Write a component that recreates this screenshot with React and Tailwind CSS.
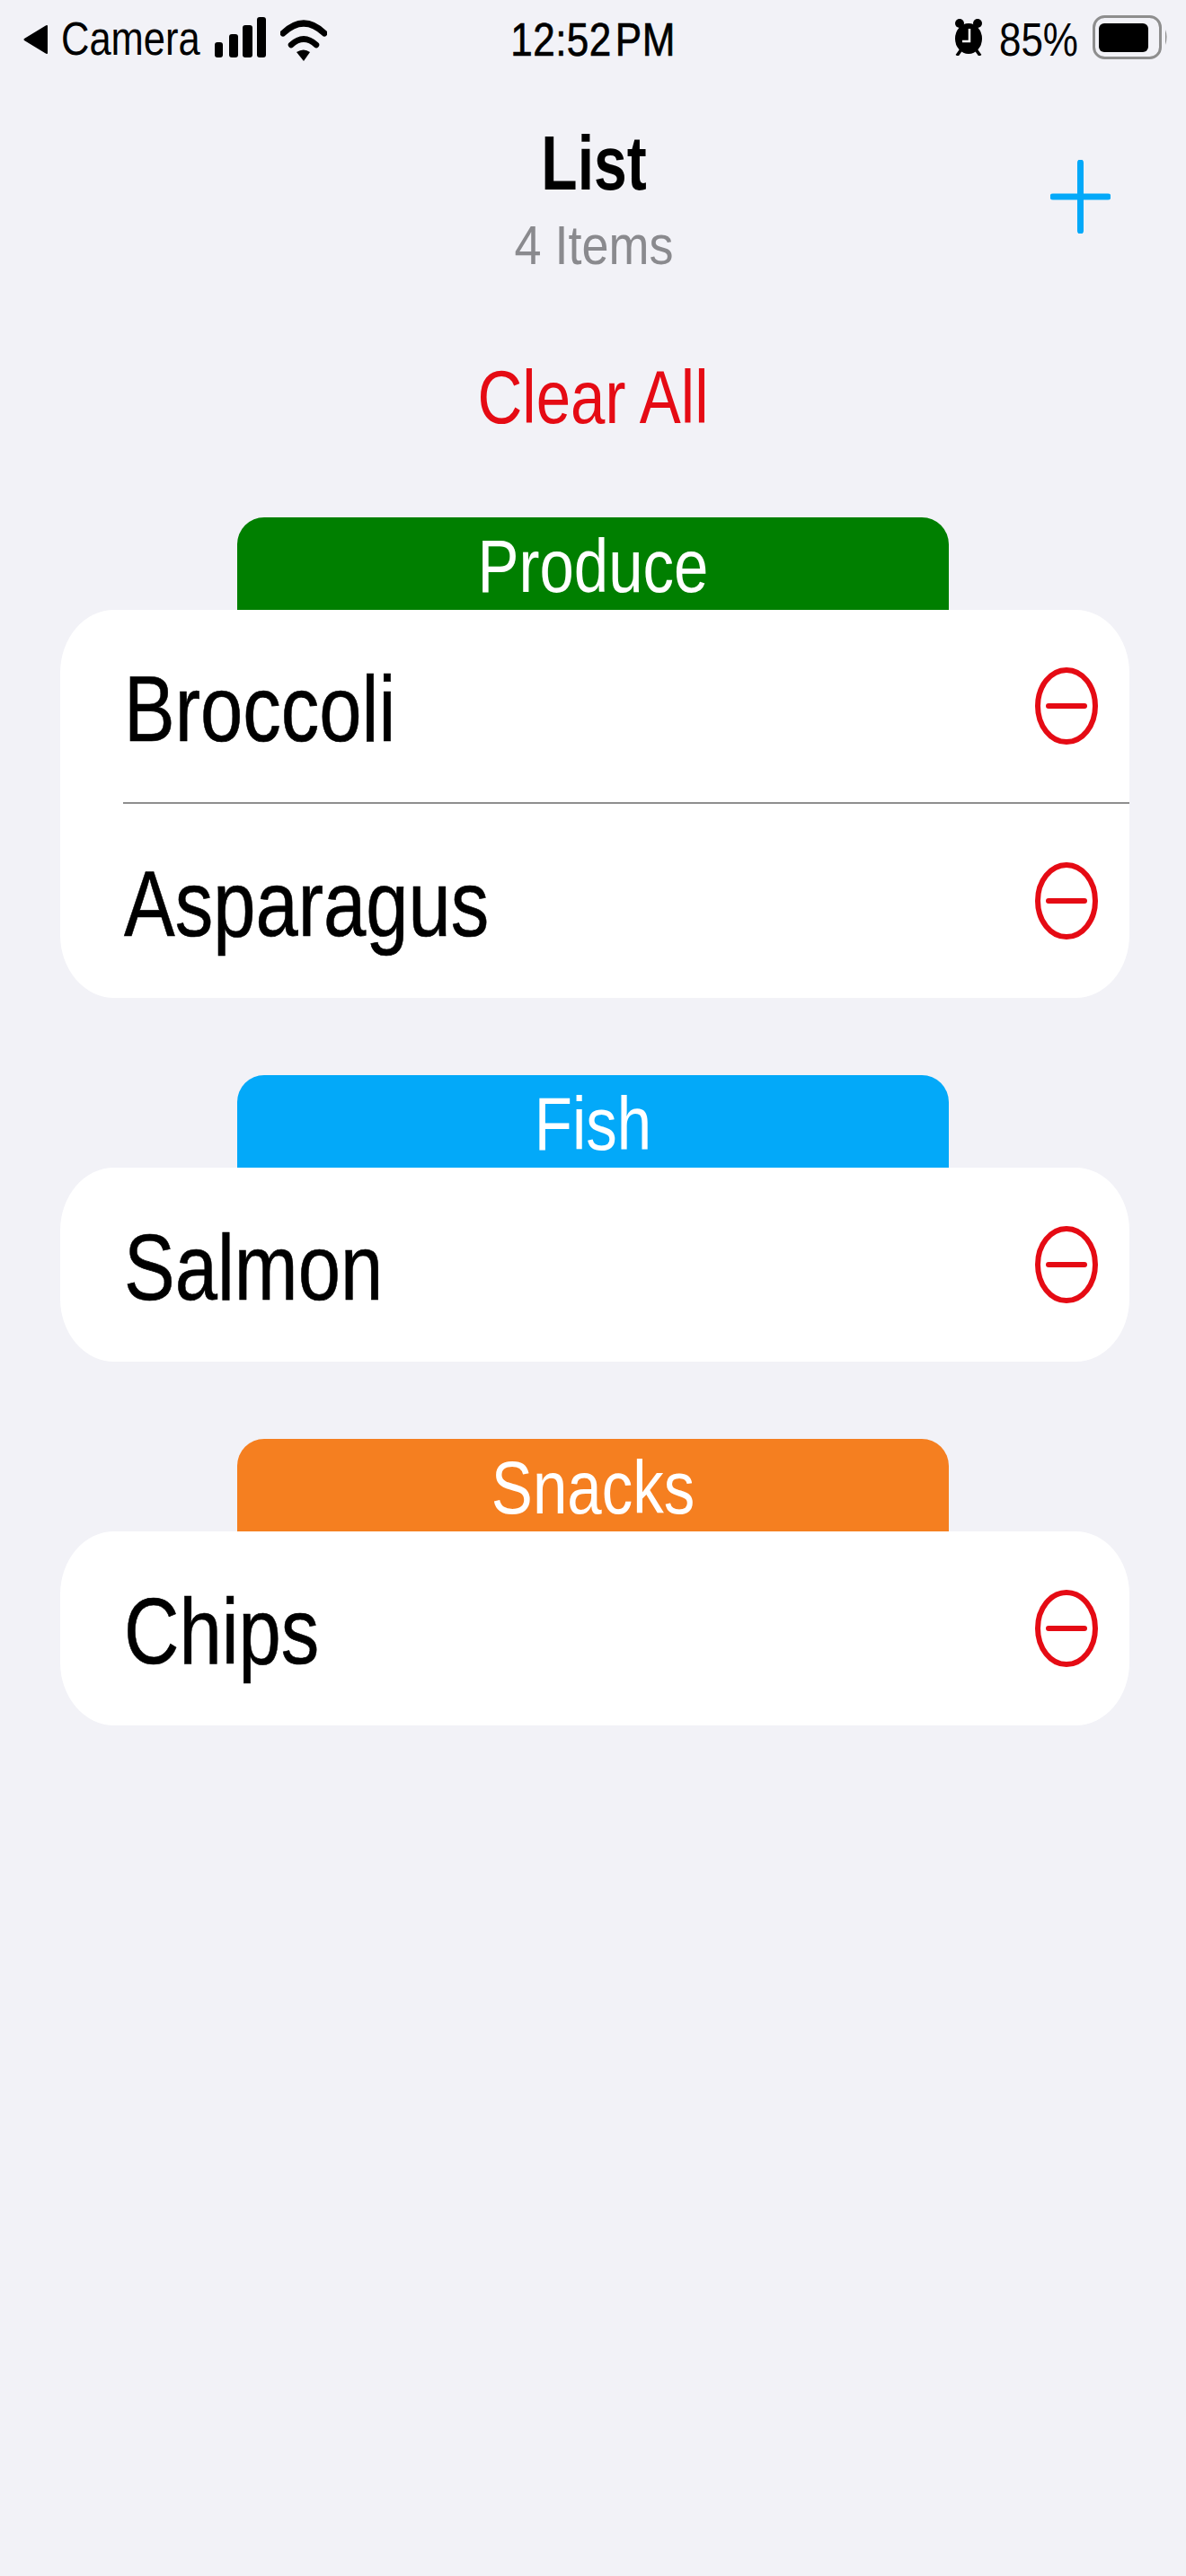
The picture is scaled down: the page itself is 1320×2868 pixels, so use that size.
const sections = [
  { name: 'Produce', color: 'bg-[#007f00]', items: ['Broccoli', 'Asparagus'] },
  { name: 'Fish', color: 'bg-[#03a9f9]', items: ['Salmon'] },
  { name: 'Snacks', color: 'bg-[#f57f20]', items: ['Chips'] },
]

function StatusBar() {
  return (
    <div className="grid grid-cols-[1fr_auto_1fr] items-center h-[88px] text-[43px] leading-none text-black">
      {/* Left */}
      <div className="flex items-center pl-[26px]">
        <svg width="27" height="32" viewBox="0 0 27 32" className="mr-[15px]">
          <path d="M27 1 L27 31 Q27 33 24 31 L1 17 Q0 16 1 15 L24 1 Q27 -1 27 1 Z" fill="#000" />
        </svg>
        <span className="inline-block scale-y-[1.18] text-[43.5px]">Camera</span>
        <svg width="57" height="45" viewBox="0 0 57 45" className="ml-[16px] mb-[6px]">
          <rect x="0" y="28" width="9" height="17" rx="3" fill="#000" />
          <rect x="16" y="19" width="10" height="26" rx="3" fill="#000" />
          <rect x="31" y="9" width="11" height="36" rx="3" fill="#000" />
          <rect x="47" y="0" width="10" height="45" rx="3" fill="#000" />
        </svg>
        <svg width="52" height="47" viewBox="0 0 52 47" className="ml-[16px] mb-[-1px]">
          <path d="M3 16 Q26 -6 49 16" fill="none" stroke="#000" strokeWidth="7" strokeLinecap="round" />
          <path d="M12 29 Q26 16 40 29" fill="none" stroke="#000" strokeWidth="6.5" strokeLinecap="round" />
          <path d="M18 37 Q26 32 33 37 L26 47 Z" fill="#000" />
        </svg>
      </div>

      {/* Time */}
      <div className="font-medium inline-block scale-y-[1.18] text-[44px] tracking-[0.5px] [-webkit-text-stroke:0.6px_#000]">
        12:52<span className="ml-[4px]">PM</span>
      </div>

      {/* Right */}
      <div className="flex items-center justify-end pr-[20px]">
        <svg width="32" height="42" viewBox="0 0 32 42" className="mr-[18px] mb-[6px]">
          <ellipse cx="16" cy="23" rx="15" ry="17" fill="#000" />
          <ellipse cx="6" cy="6" rx="5" ry="5" fill="#000" />
          <ellipse cx="26" cy="6" rx="5" ry="5" fill="#000" />
          <path d="M8 35 L3 42 M24 35 L29 42" stroke="#000" strokeWidth="3.5" />
          <path d="M17 12 V26 H9" fill="none" stroke="#fff" strokeWidth="2.5" />
        </svg>
        <span className="inline-block scale-y-[1.18] text-[44px]">85%</span>
        <svg width="84" height="49" viewBox="0 0 84 49" className="ml-[16px] mb-[6px]">
          <rect x="1.5" y="1.5" width="74" height="46" rx="12" fill="none" stroke="#8e8e8e" strokeWidth="3" />
          <rect x="7" y="9" width="55" height="32" rx="6" fill="#000" />
          <path d="M81 16 Q84 24 81 33 Z" fill="#8e8e8e" />
        </svg>
      </div>
    </div>
  )
}

function MinusIcon() {
  return (
    <svg width="70" height="86" viewBox="0 0 70 86" className="shrink-0">
      <ellipse cx="35" cy="43" rx="32" ry="40" fill="none" stroke="#e50b14" strokeWidth="6" />
      <path d="M15 43 H55" fill="none" stroke="#e50b14" strokeWidth="6" strokeLinecap="round" />
    </svg>
  )
}

function Row({ label, divider }) {
  return (
    <div className="pl-[70px]">
      <div className={`flex items-center justify-between h-[216px] pr-[35px] ${divider ? 'border-b-2 border-[#8e8e8e]' : ''}`}>
        <span className="inline-block mt-[4px] scale-y-[1.23] text-[85px] leading-none text-black pl-[1px] [-webkit-text-stroke:0.5px_#000]">{label}</span>
        <MinusIcon />
      </div>
    </div>
  )
}

function Section({ section }) {
  return (
    <div>
      <div className={`${section.color} w-[792px] ml-[197px] h-[103px] pt-[5px] rounded-t-[30px] flex items-center justify-center text-[69px] leading-none text-white`}>
        <span className="inline-block scale-y-[1.2]">{section.name}</span>
      </div>
      <div className="bg-white rounded-[60px/70px] overflow-hidden">
        {section.items.map((item, i) => (
          <Row key={item} label={item} divider={i < section.items.length - 1} />
        ))}
      </div>
    </div>
  )
}

export default function App() {
  return (
    <div className="min-h-[2868px] w-[1320px] bg-[#f2f2f7] font-['Liberation_Sans',sans-serif]">
      <StatusBar />

      {/* Title */}
      <div className="grid grid-cols-[1fr_auto_1fr] pt-[49px]">
        <div />
        <div className="flex flex-col items-center pl-[2px]">
          <div className="h-[90px] flex items-center text-[66px] leading-none font-bold text-black">
            <span className="inline-block scale-y-[1.28]">List</span>
          </div>
          <div className="h-[90px] flex items-center text-[54px] leading-none text-[#8a8a8e]">
            <span className="inline-block scale-y-[1.14]">4 Items</span>
          </div>
        </div>
        <div className="flex justify-end pr-[84px] pt-[41px]">
          <svg width="67" height="82" viewBox="0 0 67 82">
            <path d="M33.5 3 V79 M3 41 H64" fill="none" stroke="#03a9f9" strokeWidth="7" strokeLinecap="round" />
          </svg>
        </div>
      </div>

      {/* Clear */}
      <div className="flex justify-center items-center h-[90px] mt-[80px] text-[69px] leading-none text-[#e50b14]">
        <span className="inline-block scale-y-[1.2]">Clear All</span>
      </div>

      {/* Lists */}
      <div className="flex flex-col gap-[86px] pl-[67px] pr-[63px] mt-[89px]">
        {sections.map(s => <Section key={s.name} section={s} />)}
      </div>
    </div>
  )
}
